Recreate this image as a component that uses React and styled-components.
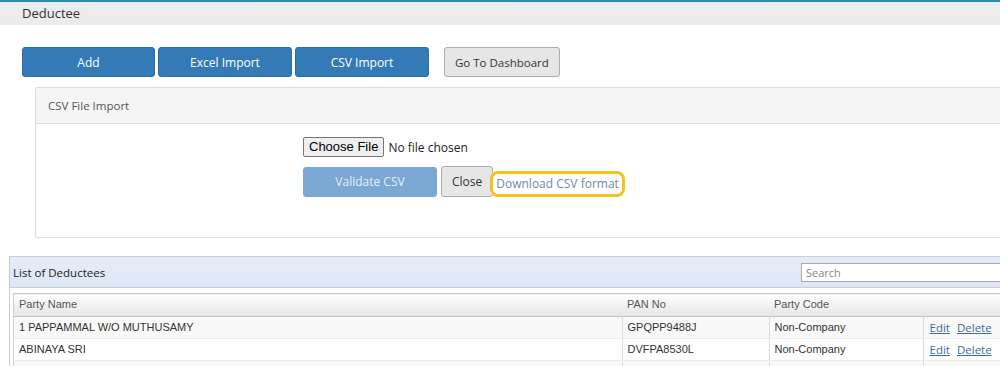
import React from 'react'
import styled, { createGlobalStyle } from 'styled-components'

const GlobalStyle = createGlobalStyle`
  html, body {
    margin: 0;
    padding: 0;
    background: #fff;
    overflow: hidden;
  }
  body {
    font-family: "Segoe UI", "Open Sans", sans-serif;
    color: #333;
  }
`

const Page = styled.div`
  width: 1000px;
  height: 366px;
  overflow: hidden;
`

const TitleBar = styled.div`
  height: 23px;
  border-top: 2px solid #2a8db4;
  background: linear-gradient(#e7edf1, #ececec 40%, #ececec);
  padding-left: 22px;
  font-size: 13px;
  line-height: 23px;
  color: #333;
`

const Content = styled.div`
  padding: 22px 0 0 22px;
`

const ButtonRow = styled.div`
  display: flex;
  align-items: center;
  gap: 3px;
`

const PrimaryButton = styled.button`
  width: ${p => p.$w}px;
  height: 30px;
  border: 1px solid #2e6da4;
  border-radius: 3px;
  background: ${p => (p.$disabled ? '#7aa7d3' : '#337ab7')};
  border-color: ${p => (p.$disabled ? '#7aa7d3' : '#2e6da4')};
  color: ${p => (p.$disabled ? '#e6eef7' : '#fff')};
  font-family: "Segoe UI", "Open Sans", sans-serif;
  font-size: 12px;
  padding: 0;
`

const GrayButton = styled.button`
  height: ${p => p.$h}px;
  padding: 0 ${p => p.$px}px;
  margin-left: ${p => p.$ml || 0}px;
  border: 1px solid #adadad;
  border-radius: 3px;
  background: #e6e6e6;
  color: #333;
  font-family: "Segoe UI", "Open Sans", sans-serif;
  font-size: ${p => p.$fs || 12}px;
`

const Panel = styled.div`
  margin: 10px 0 0 13px;
  border: 1px solid #ddd;
  border-right: none;
  border-radius: 3px 0 0 3px;
  height: 149px;
`

const PanelHeading = styled.div`
  height: 35px;
  line-height: 35px;
  padding-left: 12px;
  background: #f5f5f5;
  border-bottom: 1px solid #ddd;
  font-size: 11.5px;
  color: #555;
`

const PanelBody = styled.div`
  padding: 13px 0 0 267px;
  display: flex;
  flex-direction: column;
  gap: 9px;
`

const FileRow = styled.div`
  display: flex;
  align-items: center;
  font-family: "Segoe UI", "Open Sans", sans-serif;
  font-size: 12px;
  color: #222;
`

const ChooseButton = styled.span`
  display: inline-block;
  height: 18px;
  line-height: 18px;
  padding: 0 5px;
  border: 1px solid #767676;
  border-radius: 2px;
  background: #efefef;
  margin-right: 4px;
  color: #000;
  font-family: "Liberation Sans", Arial, sans-serif;
  font-size: 13px;
`

const ActionRow = styled.div`
  display: flex;
  align-items: center;
`

const Highlight = styled.span`
  display: inline-flex;
  align-items: center;
  height: 20px;
  margin-left: -3px;
  padding: 0 3px 0 3px;
  border: 3px solid #f6c21c;
  border-radius: 8px;
  font-size: 12px;
  color: #7189a2;
  position: relative;
  top: 2px;
`

const ListPanel = styled.div`
  margin: 18px 0 0 9px;
  border: 1px solid #c8ccd4;
  border-right: none;
`

const ListHeading = styled.div`
  height: 30px;
  display: flex;
  align-items: center;
  justify-content: space-between;
  padding-left: 3px;
  background: linear-gradient(#e6ecf6, #dde8f6);
  border-bottom: 1px solid #c9cdd4;
  font-size: 11.5px;
  color: #222;
  overflow: hidden;
`

const SearchBox = styled.div`
  width: 210px;
  height: 19px;
  margin-right: -11px;
  border: 1px solid #a9a9a9;
  background: #fff;
  font-size: 11px;
  line-height: 17px;
  padding-left: 4px;
  color: #888;
  box-sizing: border-box;
`

const TableWrap = styled.div`
  padding: 5px 0 0 3px;
`

const Table = styled.table`
  width: 1000px;
  border-collapse: collapse;
  border-top: 1px solid #c7c7c7;
  border-left: 1px solid #d3d3d3;
  font-family: "Liberation Sans", Arial, sans-serif;
  font-size: 11px;
  color: #333;
`

const HeadCell = styled.th`
  width: ${p => p.$w}px;
  height: 19px;
  padding: 0 0 3px 5px;
  text-align: left;
  font-weight: normal;
  color: #555;
  background: linear-gradient(#fcfdff, #e6e6e6);
  border-bottom: 1px solid #c3c3c3;
`

const Row = styled.tr`
  background: ${p => (p.$odd ? '#f9f9f9' : '#fff')};
`

const Cell = styled.td`
  height: 19px;
  padding: 0 0 2px 5px;
  border-bottom: 1px solid #ececec;
  border-left: ${p => (p.$sep ? '1px solid #dcdcdc' : 'none')};
`

const LinkCell = styled.td`
  height: 20px;
  padding: 0 0 1px 6px;
  border-bottom: 1px solid #ececec;
  border-left: 1px solid #dcdcdc;
  font-family: "Segoe UI", "Open Sans", sans-serif;
  font-size: 11.5px;
`

const Link = styled.a`
  color: #3c6e9c;
  text-decoration: underline;
  margin-right: 7px;
`

const rows = [
  { name: '1 PAPPAMMAL W/O MUTHUSAMY', pan: 'GPQPP9488J', code: 'Non-Company' },
  { name: 'ABINAYA SRI', pan: 'DVFPA8530L', code: 'Non-Company' },
  { name: '', pan: '', code: '' }
]

export default function App () {
  return (
    <Page>
      <GlobalStyle />
      <TitleBar>Deductee</TitleBar>
      <Content>
        <ButtonRow>
          <PrimaryButton $w={133}>Add</PrimaryButton>
          <PrimaryButton $w={134}>Excel Import</PrimaryButton>
          <PrimaryButton $w={134}>CSV Import</PrimaryButton>
          <GrayButton $h={30} $px={10} $ml={12} $fs={11.5}>Go To Dashboard</GrayButton>
        </ButtonRow>
        <Panel>
          <PanelHeading>CSV File Import</PanelHeading>
          <PanelBody>
            <FileRow>
              <ChooseButton>Choose File</ChooseButton>
              No file chosen
            </FileRow>
            <ActionRow>
              <PrimaryButton $w={134} $disabled>Validate CSV</PrimaryButton>
              <GrayButton $h={31} $px={10} $ml={4}>Close</GrayButton>
              <Highlight>Download CSV format</Highlight>
            </ActionRow>
          </PanelBody>
        </Panel>
      </Content>
      <ListPanel>
        <ListHeading>
          <span>List of Deductees</span>
          <SearchBox>Search</SearchBox>
        </ListHeading>
        <TableWrap>
          <Table>
            <thead>
              <tr>
                <HeadCell $w={603}>Party Name</HeadCell>
                <HeadCell $w={142}>PAN No</HeadCell>
                <HeadCell $w={149}>Party Code</HeadCell>
                <HeadCell />
              </tr>
            </thead>
            <tbody>
              {rows.map((r, i) => (
                <Row key={i} $odd={i % 2 === 0}>
                  <Cell>{r.name}</Cell>
                  <Cell $sep>{r.pan}</Cell>
                  <Cell $sep>{r.code}</Cell>
                  <LinkCell>
                    {r.name && <><Link>Edit</Link><Link>Delete</Link></>}
                  </LinkCell>
                </Row>
              ))}
            </tbody>
          </Table>
        </TableWrap>
      </ListPanel>
    </Page>
  )
}
